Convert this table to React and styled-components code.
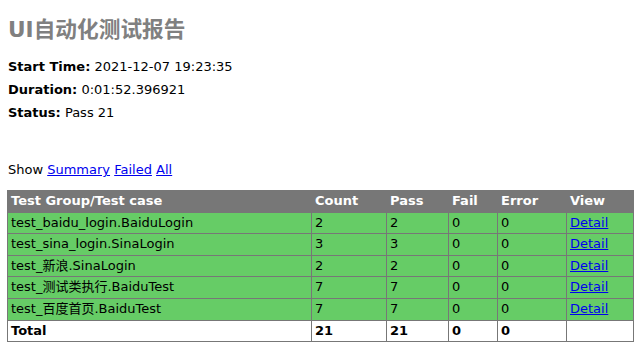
import React from "react";
import styled, { createGlobalStyle } from "styled-components";

const GlobalStyle = createGlobalStyle`
  html, body {
    margin: 0;
    padding: 0;
    background: #fff;
  }
  body {
    padding: 8px 5px 0 7px;
    font-family: "DejaVu Sans", Verdana, "Noto Sans CJK SC", sans-serif;
    font-size: 13px;
    color: #000;
  }
`;

const Page = styled.div`
  display: flex;
  flex-direction: column;
`;

const Title = styled.h1`
  margin: 9px 0 0 1px;
  font-size: 21.7px;
  line-height: 26px;
  font-weight: bold;
  color: gray;
  font-family: "DejaVu Sans", Verdana, "Noto Sans CJK SC", sans-serif;
`;

const Heading = styled.div`
  display: flex;
  flex-direction: column;
  gap: 7px;
  margin: 16px 0 0 1px;
`;

const Attribute = styled.p`
  margin: 0;
  line-height: 16px;
`;

const Label = styled.strong`
  font-weight: bold;
`;

const ShowLine = styled.div`
  margin: 41px 0 0 1px;
  line-height: 16px;
`;

const Link = styled.a`
  color: #0000ee;
  text-decoration: underline;
  cursor: pointer;
`;

const Table = styled.table`
  margin-top: 12px;
  width: 626px;
  border-collapse: collapse;
  border: 1px solid #777;
  table-layout: fixed;
`;

const Cell = styled.td`
  border: 1px solid #777;
  padding: 2px 2px 2px 3px;
  line-height: 16.6px;
  white-space: nowrap;
  text-align: left;
  vertical-align: middle;
`;

const HeadCell = styled(Cell).attrs({ as: "th" })`
  font-weight: bold;
  color: #fff;
`;

const Row = styled.tr`
  background-color: ${(p) => p.$bg};
  font-weight: ${(p) => (p.$bold ? "bold" : "normal")};
`;

const columns = [
  { name: "Test Group/Test case", width: 304 },
  { name: "Count", width: 75 },
  { name: "Pass", width: 62 },
  { name: "Fail", width: 49 },
  { name: "Error", width: 69 },
  { name: "View", width: 67 },
];

const results = [
  { name: "test_baidu_login.BaiduLogin", count: 2, pass: 2 },
  { name: "test_sina_login.SinaLogin", count: 3, pass: 3 },
  { name: "test_新浪.SinaLogin", count: 2, pass: 2 },
  { name: "test_测试类执行.BaiduTest", count: 7, pass: 7 },
  { name: "test_百度首页.BaiduTest", count: 7, pass: 7 },
];

export default function App() {
  return (
    <Page>
      <GlobalStyle />
      <Title>UI自动化测试报告</Title>
      <Heading>
        <Attribute>
          <Label>Start Time:</Label> 2021-12-07 19:23:35
        </Attribute>
        <Attribute>
          <Label>Duration:</Label> 0:01:52.396921
        </Attribute>
        <Attribute>
          <Label>Status:</Label> Pass 21
        </Attribute>
      </Heading>
      <ShowLine>
        Show <Link>Summary</Link> <Link>Failed</Link> <Link>All</Link>
      </ShowLine>
      <Table>
        <colgroup>
          {columns.map((c) => (
            <col key={c.name} style={{ width: c.width }} />
          ))}
        </colgroup>
        <thead>
          <Row $bg="#777">
            {columns.map((c) => (
              <HeadCell key={c.name}>{c.name}</HeadCell>
            ))}
          </Row>
        </thead>
        <tbody>
          {results.map((r) => (
            <Row key={r.name} $bg="#6c6">
              <Cell>{r.name}</Cell>
              <Cell>{r.count}</Cell>
              <Cell>{r.pass}</Cell>
              <Cell>0</Cell>
              <Cell>0</Cell>
              <Cell>
                <Link>Detail</Link>
              </Cell>
            </Row>
          ))}
          <Row $bg="#fff" $bold>
            <Cell>Total</Cell>
            <Cell>21</Cell>
            <Cell>21</Cell>
            <Cell>0</Cell>
            <Cell>0</Cell>
            <Cell>&nbsp;</Cell>
          </Row>
        </tbody>
      </Table>
    </Page>
  );
}
